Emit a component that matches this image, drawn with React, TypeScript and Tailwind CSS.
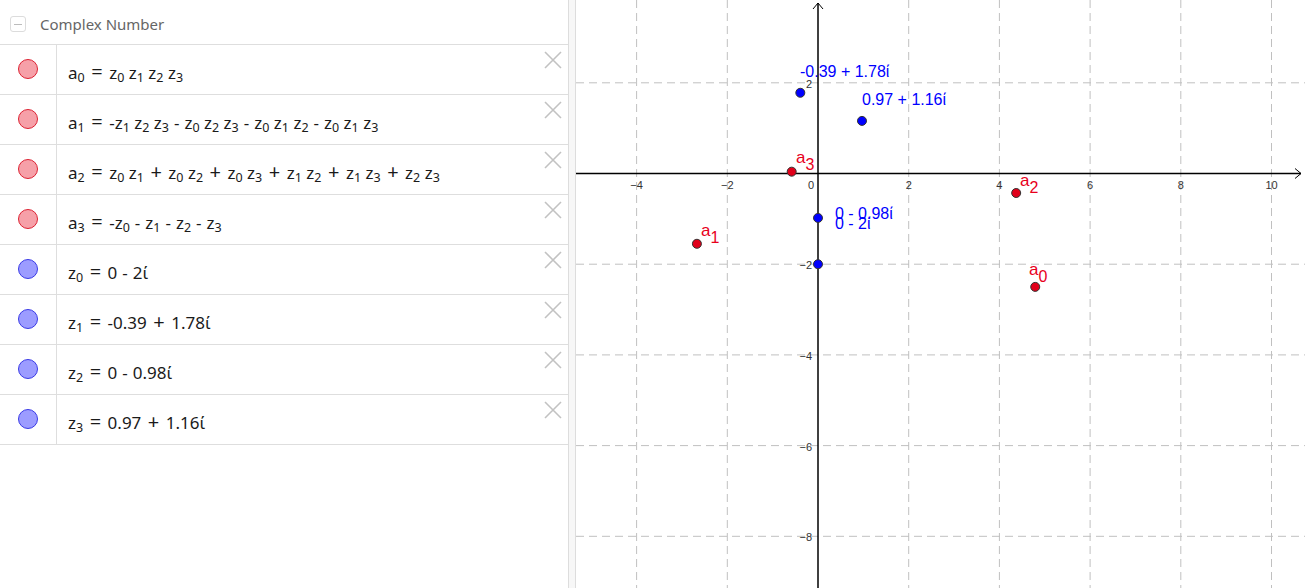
import React from "react";

type Row = { color: "red" | "blue"; expr: string };

const rows: Row[] = [
  { color: "red", expr: "a_0 = z_0 z_1 z_2 z_3" },
  { color: "red", expr: "a_1 = -z_1 z_2 z_3 - z_0 z_2 z_3 - z_0 z_1 z_2 - z_0 z_1 z_3" },
  { color: "red", expr: "a_2 = z_0 z_1 + z_0 z_2 + z_0 z_3 + z_1 z_2 + z_1 z_3 + z_2 z_3" },
  { color: "red", expr: "a_3 = -z_0 - z_1 - z_2 - z_3" },
  { color: "blue", expr: "z_0 = 0 - 2ί" },
  { color: "blue", expr: "z_1 = -0.39 + 1.78ί" },
  { color: "blue", expr: "z_2 = 0 - 0.98ί" },
  { color: "blue", expr: "z_3 = 0.97 + 1.16ί" },
];

// tokens: "x_n" variables, " = ", " + ", " - " operators, plain text otherwise
function MathText({ s }: { s: string }) {
  const tokens = s.split(/( = | \+ | - |[a-z]_\d)/).filter(Boolean);
  return (
    <>
      {tokens.map((t, i) => {
        if (/^[a-z]_\d$/.test(t)) {
          return (
            <span key={i}>
              {t[0]}
              <sub className="text-[12.5px]">{t[2]}</sub>
            </span>
          );
        }
        if (t === " = " || t === " + ") {
          return (
            <span key={i} className="mx-[6.5px] text-[20px] leading-none">
              {t.trim()}
            </span>
          );
        }
        if (t === " - ") {
          return (
            <span key={i} className="mx-[5px]">
              -
            </span>
          );
        }
        return (
          <span key={i} className="whitespace-pre">
            {t}
          </span>
        );
      })}
    </>
  );
}

function CloseIcon() {
  return (
    <svg width="20" height="20" viewBox="0 0 20 20" className="block">
      <path d="M2 2 L18 18 M18 2 L2 18" stroke="#c2c2c2" strokeWidth="1.6" />
    </svg>
  );
}

function AlgebraRow({ row }: { row: Row }) {
  return (
    <div className="relative flex h-[50px] border-b border-[#dedede]">
      <div className="flex w-[57px] shrink-0 items-center justify-center border-r border-[#dedede] pb-[2px] pr-[1px]">
        <div
          className={
            row.color === "red"
              ? "h-[20px] w-[20px] rounded-full border border-[#dd2233] bg-[#f6a0a8]"
              : "h-[20px] w-[20px] rounded-full border border-[#3a3ae6] bg-[#9c9cff]"
          }
        />
      </div>
      <div className="flex items-baseline self-center pl-[11px] pt-[5px] text-[17px] leading-[20px] text-[#1a1a1a]">
        <MathText s={row.expr} />
      </div>
      <div className="absolute right-[5px] top-[5px]">
        <CloseIcon />
      </div>
    </div>
  );
}

const OX = 242;
const OY = 173.5;
const S = 45.35;
const px = (x: number) => OX + x * S;
const py = (y: number) => OY - y * S;

function Graph() {
  const xs = [-4, -2, 2, 4, 6, 8, 10];
  const ys = [2, -2, -4, -6, -8];
  const blue = [
    [-0.39, 1.78],
    [0.97, 1.16],
    [0, -0.98],
    [0, -2],
  ];
  const red = [
    [4.79, -2.5],
    [-2.67, -1.55],
    [4.37, -0.43],
    [-0.58, 0.04],
  ];
  const font = "'Liberation Sans', Arial, sans-serif";
  return (
    <svg width="729" height="588" viewBox="0 0 729 588" className="block" style={{ fontFamily: font }}>
      {xs.map((x) => (
        <line key={"gx" + x} x1={px(x)} y1={0} x2={px(x)} y2={588} stroke="#c0c0c0" strokeDasharray="8 5" />
      ))}
      {ys.map((y) => (
        <line key={"gy" + y} x1={0} y1={py(y)} x2={729} y2={py(y)} stroke="#c0c0c0" strokeDasharray="8 5" />
      ))}
      {/* axes */}
      <line x1={0} y1={OY} x2={725} y2={OY} stroke="#000" strokeWidth="1.5" />
      <line x1={OX} y1={3} x2={OX} y2={588} stroke="#000" strokeWidth="1.5" />
      <path d={`M719 ${OY - 5} L725 ${OY} L719 ${OY + 5}`} fill="none" stroke="#000" strokeWidth="1" />
      <path d={`M${OX - 5} 9 L${OX} 3 L${OX + 5} 9`} fill="none" stroke="#000" strokeWidth="1" />
      {/* tick labels */}
      <g fontSize="11" fill="#333">
        {xs.map((x) => (
          <text key={"tx" + x} x={px(x)} y={189} textAnchor="middle">
            {x < 0 ? "\u2212" + -x : x}
          </text>
        ))}
        <text x={OX - 4} y={189} textAnchor="end">0</text>
        {ys.map((y) => (
          <text key={"ty" + y} x={OX - 6} y={py(y) + 5} textAnchor="end">
            {y < 0 ? "\u2212" + -y : y}
          </text>
        ))}
      </g>
      {/* points */}
      {blue.map(([x, y], i) => (
        <circle key={"b" + i} cx={px(x)} cy={py(y)} r="4.5" fill="#0000ff" stroke="#333" strokeWidth="1" />
      ))}
      {red.map(([x, y], i) => (
        <circle key={"r" + i} cx={px(x)} cy={py(y)} r="4.5" fill="#e0001a" stroke="#333" strokeWidth="1" />
      ))}
      {/* labels */}
      <g fontSize="16" fill="#0000ff">
        <text x={224} y={77}>-0.39 + 1.78ί</text>
        <text x={286} y={105}>0.97 + 1.16ί</text>
        <text x={259} y={219}>0 - 0.98ί</text>
        <text x={259} y={229}>0 - 2ί</text>
      </g>
      <g fontSize="17" fill="#e8001c">
        <text x={220} y={163}>a<tspan fontSize="16" dy="7">3</tspan></text>
        <text x={125} y={236}>a<tspan fontSize="16" dy="7">1</tspan></text>
        <text x={444} y={186}>a<tspan fontSize="16" dy="7">2</tspan></text>
        <text x={453} y={275}>a<tspan fontSize="16" dy="7">0</tspan></text>
      </g>
    </svg>
  );
}

export default function App() {
  return (
    <div className="flex h-[588px] w-[1305px] overflow-hidden bg-white" style={{ fontFamily: "'Noto Sans', 'Open Sans', sans-serif" }}>
      <div className="w-[568px] shrink-0">
        <div className="flex h-[45px] items-center border-b border-[#dedede] pl-[10px] pt-[4px]">
          <div className="flex h-[16px] w-[16px] items-center justify-center rounded-[3px] border border-[#dcdcdc]">
            <div className="h-[1px] w-[8px] bg-[#bcbcbc]" />
          </div>
          <span className="ml-[14px] text-[15px] text-[#666]">Complex Number</span>
        </div>
        {rows.map((r, i) => (
          <AlgebraRow key={i} row={r} />
        ))}
      </div>
      <div className="w-[8px] shrink-0 border-x border-[#dddddd] bg-[#f7f7f7]" />
      <div className="flex-1">
        <Graph />
      </div>
    </div>
  );
}
